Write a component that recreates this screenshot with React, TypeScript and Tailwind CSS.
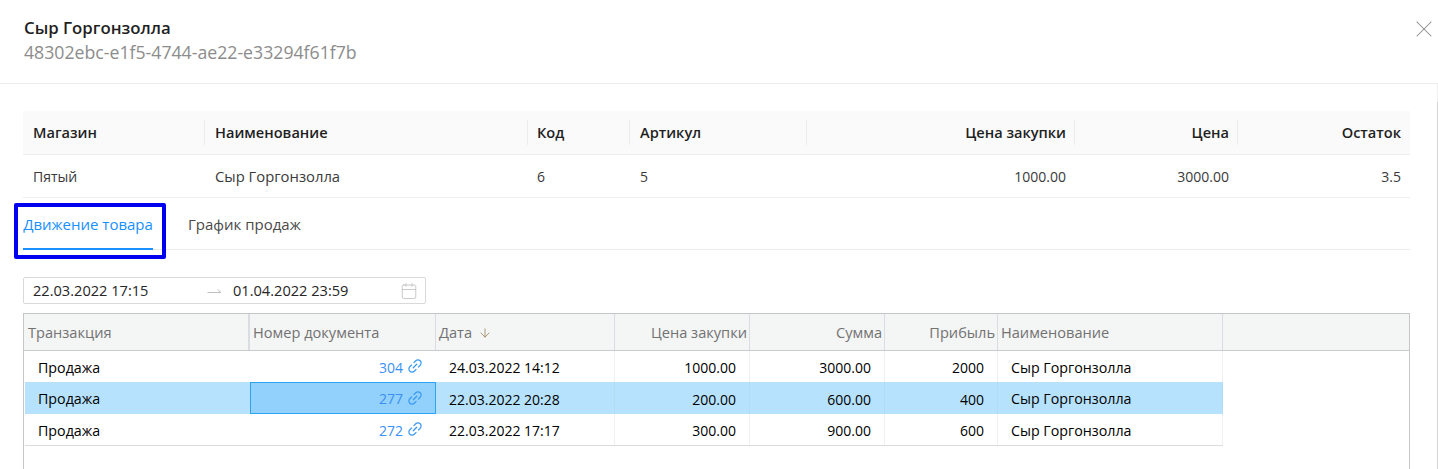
import React from "react";
import { ArrowDown, Calendar, X } from "lucide-react";
import { AiOutlineLink } from "react-icons/ai";

const SUMMARY_COLS = [
    { title: "Магазин", value: "Пятый", width: "w-[182px]", right: false, valueSize: "text-[14px]", pad: "pl-[10px]" },
    { title: "Наименование", value: "Сыр Горгонзолла", width: "w-[323px]", right: false, valueSize: "text-[14.8px]", pad: "pl-[10px]" },
    { title: "Код", value: "6", width: "w-[102px]", right: false, valueSize: "text-[14px]", pad: "pl-[9px]" },
    { title: "Артикул", value: "5", width: "w-[177px]", right: false, valueSize: "text-[14px]", pad: "pl-[10px]" },
    { title: "Цена закупки", value: "1000.00", width: "w-[268px]", right: true, valueSize: "text-[14px]", pad: "pl-[10px]" },
    { title: "Цена", value: "3000.00", width: "w-[163px]", right: true, valueSize: "text-[14px]", pad: "pl-[10px]" },
    { title: "Остаток", value: "3.5", width: "w-[172px]", right: true, valueSize: "text-[14px]", pad: "pl-[10px]" },
];

const ROWS = [
    { doc: "304", date: "24.03.2022 14:12", cost: "1000.00", sum: "3000.00", profit: "2000", selected: false, height: "h-[31px]" },
    { doc: "277", date: "22.03.2022 20:28", cost: "200.00", sum: "600.00", profit: "400", selected: true, height: "h-[32px]" },
    { doc: "272", date: "22.03.2022 17:17", cost: "300.00", sum: "900.00", profit: "600", selected: false, height: "h-[31px]" },
];

function GridHead({ width, right, pad, children }: { width: string; right?: boolean; pad?: string; children?: React.ReactNode }) {
    return (
        <div className={`${width} shrink-0 h-full flex items-center pt-[1px] ${pad ?? "pl-[3px]"} border-r border-[#d9dce0] text-[14.6px] text-[#727272] ${right ? "justify-end pr-[2px]" : ""}`}>
            {children}
        </div>
    );
}

function GridCell({ width, right, selected, children }: { width: string; right?: boolean; selected?: boolean; children?: React.ReactNode }) {
    return (
        <div className={`${width} shrink-0 h-full flex items-center pt-[2px] border-r pl-[13px] ${selected ? "border-[#aedcf9]" : "border-[#eef0f2]"} ${right ? "justify-end pr-[13px]" : ""}`}>
            {children}
        </div>
    );
}

export default function App() {
    return (
        <div className="w-[1438px] h-[469px] overflow-hidden bg-white text-[14px] text-[#262626] font-['Open_Sans','Noto_Sans',sans-serif]">
            <div className="h-[84px] border-b border-[#ececec] pl-[24px] pt-[15px] flex justify-between">
                <div>
                    <div className="text-[16.8px] leading-[25px] font-[560] text-[#1f1f1f]">Сыр Горгонзолла</div>
                    <div className="text-[17.7px] leading-[25px] text-[#8c8c8c]">48302ebc-e1f5-4744-ae22-e33294f61f7b</div>
                </div>
                <X size={28} strokeWidth={0.9} className="text-[#8c8c8c]" />
            </div>

            <div className="relative pl-[23px] pr-[27px] pt-[27px] border-r border-[#f0f0f0] h-full">
                <div className="absolute right-[-1px] top-[18px] bottom-0 w-px bg-[#d4d4d4]" />
                <div>
                    <div className="flex h-[44px] bg-[#fafafa] border-b border-[#efefef] font-[560] text-[14.6px] text-[#1f1f1f]">
                        {SUMMARY_COLS.map((col, i) => (
                            <div key={col.title} className={`${col.width} shrink-0 flex items-center`}>
                                <div className={`flex-1 h-[25px] flex items-center ${col.pad} ${i === 6 ? "pr-[9px]" : "pr-[8px] border-r border-[#ececec]"} ${col.right ? "justify-end" : ""}`}>
                                    {col.title}
                                </div>
                            </div>
                        ))}
                    </div>
                    <div className="flex h-[43px] border-b border-[#efefef] text-[#3a3a3a]">
                        {SUMMARY_COLS.map((col) => (
                            <div key={col.title} className={`${col.width} ${col.valueSize} shrink-0 flex items-center ${col.pad} pr-[9px] ${col.right ? "justify-end" : ""}`}>
                                {col.value}
                            </div>
                        ))}
                    </div>
                </div>

                <div className="flex h-[52px] border-b border-[#ececec] text-[15px]">
                    <div className="relative h-[52px] w-[130px] mr-[35px] pt-[2px] flex items-center justify-center text-[#1890ff] border-b-2 border-[#1890ff]">
                        Движение товара
                        <div className="absolute left-[-9px] top-[5px] w-[152px] h-[56px] border-[4px] border-[#0000f0] rounded-[2px] pointer-events-none" />
                    </div>
                    <div className="h-[52px] flex items-center text-[#4a4a4a]">График продаж</div>
                </div>

                <div className="mt-[27px] w-[403px] h-[27px] border border-[#d9d9d9] rounded-[2px] flex items-center pl-[9px] pr-[7px] text-[14.6px]">
                    <span className="w-[174px]">22.03.2022 17:15</span>
                    <span className="w-[26px] h-[8px] flex justify-start mt-[2px]">
                        <svg width="15" height="7" viewBox="0 0 15 7" fill="none" stroke="#bfbfbf" strokeWidth="1">
                            <path d="M0.5 4.5H14L10.5 1.5" />
                        </svg>
                    </span>
                    <span className="flex-1">01.04.2022 23:59</span>
                    <Calendar size={18} strokeWidth={1.1} className="text-[#bfbfbf]" />
                </div>

                <div className="mt-[9px] h-[160px] border border-[#c4c6ca] bg-white">
                    <div className="flex h-[37px] bg-[#f4f5f5] border-b border-[#c9cbcf]">
                        <GridHead width="w-[226px] border-r-2" pad="pl-[4px]">Транзакция</GridHead>
                        <GridHead width="w-[186px]">Номер документа</GridHead>
                        <GridHead width="w-[179px]">
                            Дата
                            <ArrowDown size={14} strokeWidth={1.4} className="text-[#9a8258] ml-[6px]" />
                        </GridHead>
                        <GridHead width="w-[135px]" right>Цена закупки</GridHead>
                        <GridHead width="w-[135px]" right>Сумма</GridHead>
                        <GridHead width="w-[113px]" right>Прибыль</GridHead>
                        <GridHead width="w-[225px]">Наименование</GridHead>
                    </div>
                    <div className="ml-px w-[1198px] border-b border-[#dcdcdc] text-black">
                        {ROWS.map((row) => (
                            <div key={row.doc} className={`flex ${row.height} ${row.selected ? "bg-[#b7e2fd]" : ""}`}>
                                <div className="w-[225px] shrink-0 h-full flex items-center pt-[2px] pl-[13px] text-[14.25px]">Продажа</div>
                                <div className={`w-[186px] shrink-0 h-full flex items-center justify-end pt-[1px] pr-[11px] text-[#3b8ff5] ${row.selected ? "bg-[#91d1fb] border border-[#2ea3f2]" : "border border-transparent"}`}>
                                    {row.doc}
                                    <AiOutlineLink size={18} className="text-[#3b9af5] ml-[3px] mt-[-2px]" />
                                </div>
                                <GridCell width="w-[179px]" selected={row.selected}>{row.date}</GridCell>
                                <GridCell width="w-[135px]" right selected={row.selected}>{row.cost}</GridCell>
                                <GridCell width="w-[135px]" right selected={row.selected}>{row.sum}</GridCell>
                                <GridCell width="w-[113px]" right selected={row.selected}>{row.profit}</GridCell>
                                <GridCell width="w-[225px]" selected={row.selected}><span className="text-[14.25px]">Сыр Горгонзолла</span></GridCell>
                            </div>
                        ))}
                    </div>
                </div>
            </div>
        </div>
    );
}
